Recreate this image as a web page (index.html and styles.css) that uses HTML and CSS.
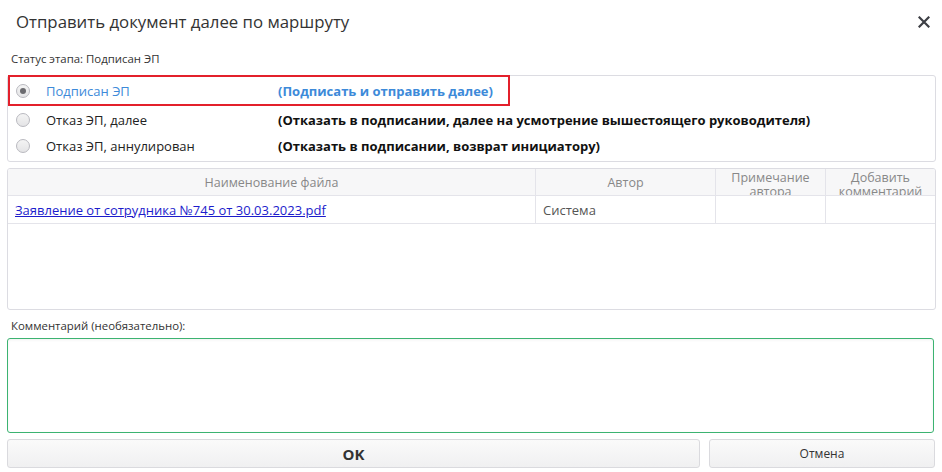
FILE: index.html
```html
<!DOCTYPE html>
<html lang="ru">
<head>
<meta charset="utf-8">
<title>Отправить документ далее по маршруту</title>
<link rel="stylesheet" href="styles.css">
</head>
<body>
<div class="dialog">
  <div class="header">
    <div class="title">Отправить документ далее по маршруту</div>
    <svg class="close" width="12" height="12" viewBox="0 0 12 12"><path d="M1.5 1.5 L10.5 10.5 M10.5 1.5 L1.5 10.5" stroke="#3d3f45" stroke-width="2.2" stroke-linecap="square"/></svg>
  </div>
  <div class="status">Статус этапа: Подписан ЭП</div>
  <div class="radios">
    <div class="row row-active">
      <span class="radio checked"></span>
      <span class="label label-active">Подписан ЭП</span>
      <span class="desc desc-active">(Подписать и отправить далее)</span>
    </div>
    <div class="row">
      <span class="radio"></span>
      <span class="label">Отказ ЭП, далее</span>
      <span class="desc">(Отказать в подписании, далее на усмотрение вышестоящего руководителя)</span>
    </div>
    <div class="row">
      <span class="radio"></span>
      <span class="label">Отказ ЭП, аннулирован</span>
      <span class="desc">(Отказать в подписании, возврат инициатору)</span>
    </div>
  </div>
  <div class="files">
    <div class="thead">
      <div class="c c1"><span class="h">Наименование файла</span></div>
      <div class="c c2"><span class="h">Автор</span></div>
      <div class="c c3"><span class="h wrap">Примечание автора</span></div>
      <div class="c c4"><span class="h wrap">Добавить комментарий</span></div>
    </div>
    <div class="trow">
      <div class="c c1"><a class="file" href="#">Заявление от сотрудника №745 от 30.03.2023.pdf</a></div>
      <div class="c c2">Система</div>
      <div class="c c3"></div>
      <div class="c c4"></div>
    </div>
  </div>
  <div class="comment-label">Комментарий (необязательно):</div>
  <div class="comment"></div>
  <div class="buttons">
    <div class="btn ok">OK</div>
    <div class="btn cancel">Отмена</div>
  </div>
</div>
</body>
</html>
```
FILE: styles.css
```css
html, body {
  margin: 0;
  padding: 0;
  background: #fff;
}
body {
  font-family: "Open Sans", "Noto Sans", sans-serif;
  color: #222;
  width: 942px;
  height: 472px;
  overflow: hidden;
}
.dialog {
  display: flex;
  flex-direction: column;
  padding: 0 6px 0 7px;
}
.header {
  display: flex;
  align-items: center;
  justify-content: space-between;
  height: 42px;
  padding: 0 6px 0 9px;
}
.title {
  font-size: 16.8px;
  color: #333;
}
.close {
  display: block;
  margin-top: 2px;
}
.status {
  font-size: 11.4px;
  color: #333;
  margin: 8px 0 0 4px;
  line-height: 18px;
}
.radios {
  margin-top: 7px;
  border: 1px solid #dcdce2;
  border-radius: 3px;
  display: flex;
  flex-direction: column;
  padding-bottom: 2px;
}
.row {
  display: flex;
  align-items: center;
  height: 26px;
  font-size: 13px;
}
.row-active {
  height: 27px;
  width: 498px;
  border: 2px solid #e3202b;
  margin-top: -1px;
  margin-bottom: 1px;
}
.radio {
  width: 12px;
  height: 12px;
  border: 1px solid #b9b9bf;
  border-radius: 50%;
  background: linear-gradient(#f4f4f4, #e4e4e6);
  margin-left: 8px;
  display: flex;
  align-items: center;
  justify-content: center;
  flex: none;
}
.row-active .radio {
  margin-left: 6px;
}
.radio.checked::after {
  content: "";
  width: 6px;
  height: 6px;
  border-radius: 50%;
  background: #6b6b6f;
}
.label {
  margin-left: 16px;
  width: 232px;
  color: #222;
}
.label-active {
  color: #3d8ad9;
}
.desc {
  font-weight: bold;
  color: #111;
}
.desc-active {
  color: #3d8ad9;
}
.files {
  margin-top: 6px;
  height: 140px;
  border: 1px solid #dcdce2;
  border-radius: 3px;
  overflow: hidden;
}
.thead, .trow {
  display: flex;
  border-bottom: 1px solid #e4e4ea;
}
.thead {
  height: 26px;
  background: #f7f7f8;
}
.trow {
  height: 27px;
}
.c {
  border-right: 1px solid #e4e4ea;
  box-sizing: border-box;
  overflow: hidden;
}
.c4 { border-right: none; }
.c1 { width: 528px; }
.c2 { width: 180px; }
.c3 { width: 110px; }
.c4 { flex: 1; }
.thead .c {
  display: flex;
  justify-content: center;
  font-size: 12.5px;
  color: #888;
  text-align: center;
}
.h {
  line-height: 14px;
  padding-top: 7px;
}
.h.wrap {
  padding-top: 0;
  line-height: 14px;
  margin-top: 2px;
}
.trow .c {
  display: flex;
  align-items: center;
  font-size: 13px;
  padding-left: 7px;
  color: #555;
}
.file {
  color: #1c1ccc;
  text-decoration: underline;
  font-size: 13px;
}
.comment-label {
  font-size: 11.4px;
  color: #333;
  margin: 8px 0 0 4px;
  line-height: 16px;
}
.comment {
  margin-top: 4px;
  height: 93px;
  width: 925px;
  border: 1px solid #3cb371;
  border-radius: 3px;
  box-shadow: inset 0 1px 3px rgba(0,0,0,0.06);
}
.buttons {
  display: flex;
  gap: 9px;
  margin-top: 6px;
  width: 928px;
}
.btn {
  height: 27px;
  border: 1px solid #dadade;
  border-radius: 3px;
  background: linear-gradient(#fafafa, #f0f0f1);
  display: flex;
  align-items: center;
  justify-content: center;
  color: #333;
}
.ok {
  flex: 1;
  font-weight: bold;
  font-size: 15px;
}
.cancel {
  width: 224px;
  font-size: 12px;
}
```
